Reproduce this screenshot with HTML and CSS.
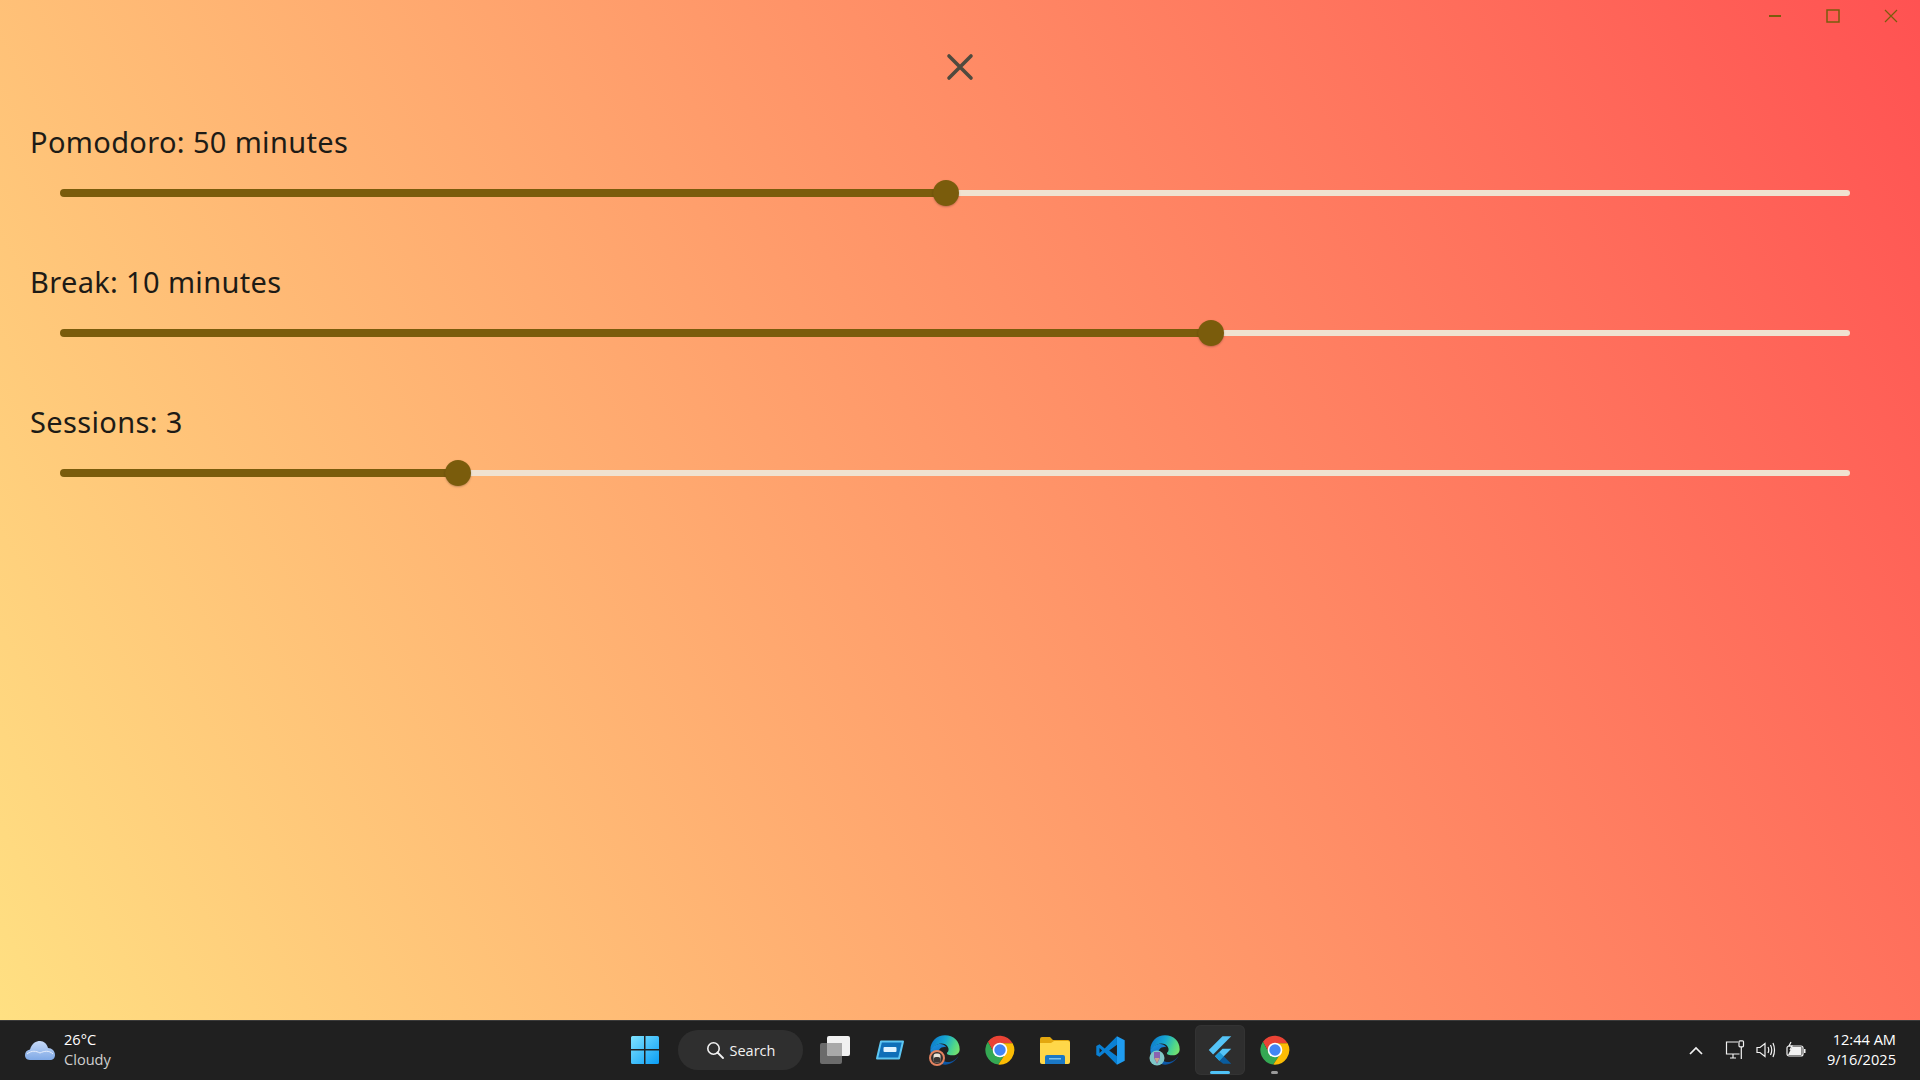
FILE: index.html
```html
<!DOCTYPE html>
<html lang="en">
<head>
<meta charset="utf-8">
<title>Pomodoro settings</title>
<link rel="stylesheet" href="styles.css">
</head>
<body>
<div class="screen">
  <main class="app">
    <div class="titlebar">
      <div class="winbtn"><svg width="14" height="14" viewBox="0 0 14 14"><rect x="1" y="6" width="12" height="2" fill="#7a5c0c"/></svg></div>
      <div class="winbtn"><svg width="14" height="14" viewBox="0 0 14 14"><path d="M1 1h12v12H1z" fill="none" stroke="#7a5c0c" stroke-width="1.5"/></svg></div>
      <div class="winbtn"><svg width="14" height="14" viewBox="0 0 14 14"><path d="M1 1l12 12M13 1L1 13" stroke="#7a5c0c" stroke-width="1.2"/></svg></div>
    </div>
    <div class="closerow">
      <svg width="28" height="28" viewBox="0 0 28 28"><path d="M3 3l22 22M25 3L3 25" stroke="#4f4a3e" stroke-width="3.6" stroke-linecap="round"/></svg>
    </div>
    <section class="fields">
      <div class="field">
        <div class="label">Pomodoro: 50 minutes</div>
        <div class="slider"><span class="fill" style="width:49.5%"></span><span class="thumb"></span><span class="rest"></span></div>
      </div>
      <div class="field">
        <div class="label">Break: 10 minutes</div>
        <div class="slider"><span class="fill" style="width:64.3%"></span><span class="thumb"></span><span class="rest"></span></div>
      </div>
      <div class="field">
        <div class="label">Sessions: 3</div>
        <div class="slider"><span class="fill" style="width:22.23%"></span><span class="thumb"></span><span class="rest"></span></div>
      </div>
    </section>
  </main>

  <footer class="taskbar">
    <div class="weather">
      <svg width="32" height="22" viewBox="0 0 32 22">
        <defs><linearGradient id="cl" x1="0" y1="0" x2="0" y2="1"><stop offset="0" stop-color="#c6d9f7"/><stop offset="1" stop-color="#7fa9e6"/></linearGradient></defs>
        <path d="M6 21C2 21 1 18 1 16C1 13 3 11 6 10.500C8 4 12 2 16 2C20 2 23 5 24 9C28 9 31 12 31 16C31 19 29 21 26 21Z" fill="url(#cl)"/>
        <path d="M3 15C8 11 12 12 16 14C20 12 25 11 29 15" fill="none" stroke="#e6eefc" stroke-width="1"/>
      </svg>
      <div class="weather-text"><span class="temp">26°C</span><span class="cond">Cloudy</span></div>
    </div>

    <div class="center">
      <div class="tbtn">
        <svg width="30" height="30" viewBox="0 0 30 30">
          <defs><linearGradient id="wn" x1="0" y1="0" x2="1" y2="1"><stop offset="0" stop-color="#7fe3ff"/><stop offset="1" stop-color="#0a9df5"/></linearGradient></defs>
          <path d="M1 2.500Q1 1 2.500 1H14V14H1zM15.500 1H27.500Q29 1 29 2.500V14H15.500zM1 15.500H14V29H2.500Q1 29 1 27.500zM15.500 15.500H29V27.500Q29 29 27.500 29H15.500z" fill="url(#wn)"/>
        </svg>
      </div>
      <div class="search">
        <svg width="18" height="18" viewBox="0 0 18 18"><circle cx="7.500" cy="7.500" r="5.700" fill="none" stroke="#f2f2f2" stroke-width="1.600"/><path d="M11.500 11.500L17 17" stroke="#f2f2f2" stroke-width="1.800" stroke-linecap="round"/></svg>
        <span>Search</span>
      </div>
      <div class="tbtn">
        <svg width="32" height="30" viewBox="0 0 32 30">
          <rect x="1" y="8" width="22" height="21" rx="2" fill="#6b6b6b"/>
          <rect x="8" y="1" width="23" height="20" rx="2" fill="#f1f1f1"/>
          <path d="M8 8h15v13H10a2 2 0 0 1-2-2z" fill="#a9a9a9"/>
        </svg>
      </div>
      <div class="tbtn">
        <svg width="28" height="20" viewBox="0 0 28 20">
          <path d="M5 1.500H27L23 18.500H1z" fill="#0f6fb8" stroke="#5cc6f2" stroke-width="2" stroke-linejoin="round"/>
          <rect x="7.500" y="7" width="13" height="5" rx="1" fill="#dff3ff"/>
        </svg>
      </div>
      <div class="tbtn">
        <svg class="app-ico" viewBox="0 0 48 48"><use href="#edge"/></svg>
        <svg class="badge" viewBox="0 0 16 16"><circle cx="8" cy="8" r="7" fill="#33302e" stroke="#e2825f" stroke-width="2"/><rect x="4.500" y="3.500" width="7" height="9" rx="2.500" fill="#e9e2d8"/><rect x="4.500" y="7" width="7" height="5.500" rx="2.500" fill="#3a3432"/></svg>
      </div>
      <div class="tbtn"><svg class="app-ico" viewBox="0 0 48 48"><use href="#chrome"/></svg></div>
      <div class="tbtn">
        <svg width="30" height="27" viewBox="0 0 30 27">
          <path d="M0 2Q0 0 2 0H10L13 3H28Q30 3 30 5V10H0z" fill="#e3a70f"/>
          <path d="M0 6H11L14 4H28Q30 4 30 6V25Q30 27 28 27H2Q0 27 0 25z" fill="#ffd749"/>
          <path d="M5 27V20Q5 18 7 18H23Q25 18 25 20V27z" fill="#1a78c6"/>
          <rect x="9" y="21" width="12" height="1.500" fill="#7cc1ee"/>
        </svg>
      </div>
      <div class="tbtn">
        <svg width="31" height="31" viewBox="0 0 48 48">
          <path d="M34 2L46 8V40L34 46V2z" fill="#1f9cf0"/>
          <path d="M34 2L15 21L7 14.500L2 17V31L7 33.500L15 27L34 46V33L22 24L34 15z" fill="#0a80d4"/>
          <path d="M7 20L11 24L7 28z" fill="#1f1f1f"/>
        </svg>
      </div>
      <div class="tbtn">
        <svg class="app-ico" viewBox="0 0 48 48"><use href="#edge"/></svg>
        <svg class="badge" viewBox="0 0 16 16"><circle cx="8" cy="8" r="7.500" fill="#7fc7c7"/><path d="M5 2H11V8L8 14L5 8z" fill="#8a62b0"/><path d="M5.500 8H10.500L8 13z" fill="#c8a888"/></svg>
      </div>
      <div class="tbtn tbtn-active">
        <svg width="30" height="32" viewBox="0 0 48 48">
          <path d="M28 2H42L13 31L6 24z" fill="#55c4f7"/>
          <path d="M42 22H28L16 34L23 41z" fill="#55c4f7"/>
          <path d="M23 41L29 46H42L30 34z" fill="#0a5c9e"/>
          <path d="M16 34L23 27L30 34L23 41z" fill="#1e9ad8"/>
        </svg>
        <span class="indicator indicator-on"></span>
      </div>
      <div class="tbtn">
        <svg class="app-ico" viewBox="0 0 48 48"><use href="#chrome"/></svg>
        <span class="indicator indicator-run"></span>
      </div>
    </div>

    <div class="tray">
      <svg class="chev" width="14" height="9" viewBox="0 0 14 9"><path d="M1 8L7 2L13 8" fill="none" stroke="#f2f2f2" stroke-width="1.700"/></svg>
      <svg class="net" width="20" height="20" viewBox="0 0 20 20" fill="none" stroke="#f2f2f2" stroke-width="1.200"><path d="M13 2H1.500V14H14.500M5 18H11M8 14V18"/><rect x="14" y="0.800" width="4.500" height="6" rx="1"/><path d="M16.300 7V19"/></svg>
      <svg class="vol" width="20" height="18" viewBox="0 0 20 18" fill="none" stroke="#f2f2f2" stroke-width="1.200"><path d="M1 6.500H4L9 2.500V15.500L4 11.500H1z"/><path d="M12 6Q13.500 9 12 12M14.500 4Q17 9 14.500 14M17 2Q20 9 17 16"/></svg>
      <svg class="bat" width="20" height="18" viewBox="0 0 20 18"><rect x="1" y="5" width="16" height="10" rx="2" fill="none" stroke="#f2f2f2" stroke-width="1.200"/><path d="M2 14L6 6H15.500V14z" fill="#f2f2f2"/><rect x="18" y="8" width="1.500" height="4" fill="#f2f2f2"/><path d="M5 1L3 5H6L4 9" fill="none" stroke="#f2f2f2" stroke-width="1.200"/></svg>
      <div class="clock"><span>12:44 AM</span><span>9/16/2025</span></div>
    </div>
  </footer>
</div>

<svg class="defs" width="0" height="0">
  <defs>
    <linearGradient id="eg1" x1="0" y1="0.300" x2="1" y2="0.600"><stop offset="0" stop-color="#0c78cc"/><stop offset="0.450" stop-color="#18a8d0"/><stop offset="0.800" stop-color="#4fd68a"/><stop offset="1" stop-color="#74e070"/></linearGradient>
    <linearGradient id="eg2" x1="0" y1="0" x2="0.700" y2="1"><stop offset="0" stop-color="#1c96e4"/><stop offset="1" stop-color="#0a4f9e"/></linearGradient>
    <g id="edge">
      <path d="M2 24C2 11 12 2 24 2C37 2 46 11 46 23C46 29 41 32 36 32C31 32 26 31 27 28C30 26 30 22 28 19C25 14 18 13 12 16C7 18 3 22 2 24Z" fill="url(#eg1)"/>
      <path d="M2 24C7 15 20 11 26 20C18 18 13 24 14 31C15 38 23 43 31 42C36 41 41 38 44 33C40 41 32 46 24 46C12 46 2 36 2 24Z" fill="url(#eg2)"/>
    </g>
    <g id="chrome">
      <path d="M24 14H43A22 22 0 0 0 5.900 11.500L15.300 29A10 10 0 0 1 24 14Z" fill="#ea4335"/>
      <path d="M5.900 11.500A22 22 0 0 0 21.500 45.900L32.700 29A10 10 0 0 1 15.300 29Z" fill="#34a853"/>
      <path d="M43 14H24A10 10 0 0 1 32.700 29L21.500 45.900A22 22 0 0 0 43 14Z" fill="#fbbc04"/>
      <circle cx="24" cy="24" r="11" fill="#fff"/>
      <circle cx="24" cy="24" r="8.500" fill="#4285f4"/>
    </g>
  </defs>
</svg>
</body>
</html>
```
FILE: styles.css
```css
* { box-sizing: border-box; }
html, body { margin: 0; height: 100%; }
body { font-family: "Noto Sans", "Open Sans", sans-serif; overflow: hidden; }
.screen { display: flex; flex-direction: column; height: 1080px; }
.app {
  height: 1020px;
  background: linear-gradient(62deg, #ffe082 0%, #ff5252 100%);
}
.titlebar { display: flex; justify-content: flex-end; height: 32px; }
.winbtn { width: 58px; display: flex; align-items: center; justify-content: center; }
.closerow { height: 70px; display: flex; align-items: center; justify-content: center; }
.fields { display: flex; flex-direction: column; gap: 49px; padding-top: 20px; }
.field { display: flex; flex-direction: column; gap: 11px; }
.label { padding-left: 30px; height: 40px; line-height: 40px; font-size: 29px; letter-spacing: 0.35px; color: #1d1b16; }
.slider { display: flex; align-items: center; height: 40px; margin: 0 70px 0 60px; }
.fill { height: 8px; background: #7a5c0c; border-radius: 4px 0 0 4px; flex: none; }
.thumb { width: 26px; height: 26px; margin: 0 -13px; border-radius: 50%; background: #7a5c0c; flex: none; position: relative; box-shadow: 0 1px 2px rgba(0,0,0,.25); z-index: 1; }
.rest { flex: 1; height: 6px; background: #f0e2d0; border-radius: 0 3px 3px 0; }

.taskbar {
  height: 60px;
  background: #202020;
  box-shadow: inset 0 1px 0 #3a3a3a;
  display: grid;
  grid-template-columns: 1fr auto 1fr;
  align-items: center;
  color: #fff;
  font-family: "Open Sans", "Noto Sans", sans-serif;
}
.weather { display: flex; align-items: center; gap: 8px; padding-left: 24px; }
.weather-text { display: flex; flex-direction: column; font-size: 14.600px; line-height: 20px; margin-bottom: 2px; }
.temp { color: #ffffff; }
.cond { color: #cfcfcf; }
.center { display: flex; gap: 5px; align-items: center; }
.tbtn { width: 50px; height: 50px; position: relative; display: flex; align-items: center; justify-content: center; border-radius: 6px; }
.tbtn-active { background: #2e2e2e; box-shadow: inset 0 0 0 1px #333; }
.app-ico { width: 32px; height: 32px; }
.badge { position: absolute; width: 16px; height: 16px; left: 9px; top: 25px; }
.indicator { position: absolute; bottom: 1px; left: 50%; height: 3px; border-radius: 2px; }
.indicator-on { width: 20px; margin-left: -10px; background: #4fc3f7; }
.indicator-run { width: 7px; margin-left: -4px; background: #9a9a9a; }
.search { width: 125px; height: 40px; margin: 0 2px 0 3px; border-radius: 20px; background: #2f2f2f; display: flex; align-items: center; justify-content: center; gap: 6px; font-size: 14.500px; color: #f2f2f2; }
.tray { display: flex; justify-content: flex-end; align-items: center; padding-right: 24px; }
.chev { margin-right: 22px; }
.net { margin-right: 11px; }
.vol { margin-right: 10px; }
.bat { margin-right: 21px; }
.clock { display: flex; flex-direction: column; align-items: flex-end; font-size: 14.600px; line-height: 20px; margin-bottom: 2px; color: #ffffff; }
.defs { position: absolute; }
```
